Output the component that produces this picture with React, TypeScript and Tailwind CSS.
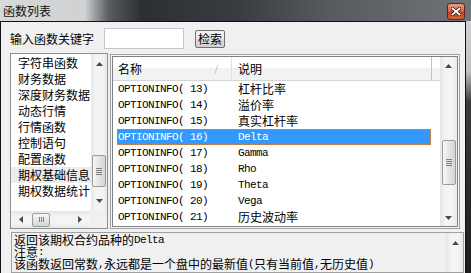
import React from 'react';

const mono = "font-['Liberation_Mono',monospace] text-[11px] tracking-[-0.6px]";

const categories = ['字符串函数', '财务数据', '深度财务数据', '动态行情', '行情函数', '控制语句', '配置函数', '期权基础信息', '期权数据统计'];

const rows: [string, string, boolean][] = [
  ['OPTIONINFO( 13)', '杠杆比率', false],
  ['OPTIONINFO( 14)', '溢价率', false],
  ['OPTIONINFO( 15)', '真实杠杆率', false],
  ['OPTIONINFO( 16)', 'Delta', true],
  ['OPTIONINFO( 17)', 'Gamma', true],
  ['OPTIONINFO( 18)', 'Rho', true],
  ['OPTIONINFO( 19)', 'Theta', true],
  ['OPTIONINFO( 20)', 'Vega', true],
  ['OPTIONINFO( 21)', '历史波动率', false],
];

function Arrow({ dir }: { dir: 'up' | 'down' | 'left' | 'right' }) {
  if (dir === 'up')
    return (
      <svg width="7" height="4" viewBox="0 0 7 4">
        <path d="M0 4L3.5 0L7 4Z" fill="#4a4a4a" />
      </svg>
    );
  if (dir === 'down')
    return (
      <svg width="7" height="4" viewBox="0 0 7 4">
        <path d="M0 0L3.5 4L7 0Z" fill="#4a4a4a" />
      </svg>
    );
  if (dir === 'left')
    return (
      <svg width="4" height="7" viewBox="0 0 4 7">
        <path d="M4 0L0 3.5L4 7Z" fill="#4a4a4a" />
      </svg>
    );
  return (
    <svg width="4" height="7" viewBox="0 0 4 7">
      <path d="M0 0L4 3.5L0 7Z" fill="#4a4a4a" />
    </svg>
  );
}

function VThumb({ className }: { className: string }) {
  return (
    <div
      className={`mx-auto w-[14px] rounded-[2px] border border-[#9b9b9b] bg-[linear-gradient(to_right,#f6f6f6,#e6e6e6_50%,#d4d4d4)] flex flex-col items-center justify-center gap-[1px] ${className}`}
    >
      <div className="w-[6px] h-[1px] bg-[#7c7c7c]" />
      <div className="w-[6px] h-[1px] bg-[#7c7c7c]" />
      <div className="w-[6px] h-[1px] bg-[#7c7c7c]" />
      <div className="w-[6px] h-[1px] bg-[#7c7c7c]" />
    </div>
  );
}

export default function App() {
  return (
    <div className="w-[471px] h-[273px] overflow-hidden flex flex-col font-['Noto_Sans_CJK_SC','Noto_Sans',sans-serif] text-[12px] text-black">
      {/* title bar */}
      <div className="h-[21px] shrink-0 flex items-center justify-between pl-[3px] pr-[6px] bg-[linear-gradient(to_right,#d7d9db_0%,#cfd1d3_18%,#5a5e63_23%,#2c3035_30%,#383c41_50%,#575b60_70%,#707478_100%)]">
        <span className="leading-[14px] text-[#111]">函数列表</span>
        <div className="w-[18px] h-[17px] mt-[1px] rounded-[3px] border border-[#5e2415] bg-[linear-gradient(to_bottom,#eb9a86,#d9694f_45%,#c1401f_55%,#d0603e)] flex items-center justify-center">
          <svg width="10" height="9" viewBox="0 0 10 9">
            <path d="M1.5 1.5L8.5 7.5M8.5 1.5L1.5 7.5" stroke="#3b1408" strokeWidth="3.4" strokeLinecap="square" />
            <path d="M1.5 1.5L8.5 7.5M8.5 1.5L1.5 7.5" stroke="#ffffff" strokeWidth="1.8" strokeLinecap="square" />
          </svg>
        </div>
      </div>

      <div className="flex flex-1 min-h-0">
        {/* client area */}
        <div className="w-[466px] shrink-0 border-l border-t border-r border-[#111] bg-[#f0f0f0] flex flex-col">
          {/* search row */}
          <div className="mt-[6px] ml-[9px] h-[21px] flex items-center">
            <span className="w-[84px] leading-[14px]">输入函数关键字</span>
            <div className="ml-[10px] w-[80px] h-[21px] border border-[#c5c7cc] bg-white" />
            <div className="ml-[11px] w-[30px] h-[18px] rounded-[2px] border border-[#707070] bg-[linear-gradient(to_bottom,#f2f2f2,#ebebeb_50%,#dddddd_50%,#cfcfcf)] flex items-center justify-center leading-[12px]">
              检索
            </div>
          </div>

          {/* lists */}
          <div className="mt-[4px] ml-[9px] flex items-start">
            {/* category list */}
            <div className="w-[98px] h-[176px] border border-[#8e8f91] bg-white flex flex-col">
              <div className="h-[157px] flex">
                <div className="flex-1 overflow-hidden pt-[1px]">
                  {categories.map((c, i) => (
                    <div
                      key={c}
                      className={`h-[16px] pl-[7px] leading-[16px] whitespace-nowrap ${i === 7 ? 'bg-[#ececec]' : ''}`}
                    >
                      {c}
                    </div>
                  ))}
                </div>
                <div className="w-[16px] bg-[linear-gradient(to_right,#e6e6e6,#f4f4f4_30%,#f4f4f4_70%,#e9e9e9)] flex flex-col">
                  <div className="h-[20px] flex items-center justify-center">
                    <Arrow dir="up" />
                  </div>
                  <VThumb className="mt-[81px] h-[32px]" />
                  <div className="flex-1" />
                  <div className="h-[20px] flex items-center justify-center">
                    <Arrow dir="down" />
                  </div>
                </div>
              </div>
              <div className="h-[17px] flex">
                <div className="w-[79px] flex items-center bg-[linear-gradient(to_bottom,#e6e6e6,#f4f4f4_30%,#f4f4f4_70%,#e9e9e9)]">
                  <div className="w-[20px] flex justify-center">
                    <Arrow dir="left" />
                  </div>
                  <div className="ml-[1px] w-[18px] h-[14px] rounded-[2px] border border-[#9b9b9b] bg-[linear-gradient(to_bottom,#f6f6f6,#e6e6e6_50%,#d4d4d4)] flex items-center justify-center gap-[1px]">
                    <div className="w-[1px] h-[5px] bg-[#7c7c7c]" />
                    <div className="w-[1px] h-[5px] bg-[#7c7c7c]" />
                    <div className="w-[1px] h-[5px] bg-[#7c7c7c]" />
                  </div>
                  <div className="flex-1" />
                  <div className="w-[20px] flex justify-center">
                    <Arrow dir="right" />
                  </div>
                </div>
                <div className="flex-1 bg-[#f0f0f0]" />
              </div>
            </div>

            {/* function list view */}
            <div className="ml-[2px] mt-[1px] w-[350px] h-[175px] border border-[#a0a0a0] p-[1px] bg-[#f7f7f7]">
              <div className="h-full border border-[#7f8185] bg-white flex">
                <div className="w-[327px] flex flex-col">
                  <div className="h-[24px] flex border-b border-[#d5d5d5] bg-[linear-gradient(to_bottom,#ffffff,#ffffff_45%,#f1f2f4_50%,#f1f2f4)]">
                    <div className="w-[119px] pl-[5px] flex items-center justify-between border-r border-[#dde1e6] pr-[13px]">
                      <span className="leading-[14px]">名称</span>
                      <span className="text-[9px] text-[#a8a8a8] leading-[10px]">/</span>
                    </div>
                    <div className="w-[200px] pl-[6px] flex items-center border-r border-[#bfc3c8]">
                      <span className="leading-[14px]">说明</span>
                    </div>
                  </div>
                  {rows.map(([name, desc, en]) => {
                    const sel = desc === 'Delta';
                    return (
                      <div
                        key={name}
                        className={`ml-[4px] w-[314px] h-[16px] flex items-center ${sel ? 'bg-[#3399ff] text-white outline-1 outline-dotted -outline-offset-1 outline-[#c7864a]' : ''}`}
                      >
                        <span className={`w-[121px] pl-[1px] whitespace-nowrap leading-[16px] ${mono}`}>{name}</span>
                        <span className={`whitespace-nowrap leading-[16px] ${en ? mono : ''}`}>{desc}</span>
                      </div>
                    );
                  })}
                </div>
                <div className="flex-1 bg-[linear-gradient(to_right,#e6e6e6,#f4f4f4_30%,#f4f4f4_70%,#e9e9e9)] flex flex-col">
                  <div className="h-[17px] flex items-center justify-center">
                    <Arrow dir="up" />
                  </div>
                  <VThumb className="mt-[66px] h-[45px]" />
                  <div className="flex-1" />
                  <div className="h-[17px] flex items-center justify-center">
                    <Arrow dir="down" />
                  </div>
                </div>
              </div>
            </div>
          </div>

          {/* description */}
          <div className="mt-[3px] ml-[10px] w-[453px] flex-1 border border-[#a0a0a0] bg-[#f0f0f0] flex">
            <div className="flex-1 pl-[2px] pt-[1px] whitespace-nowrap flex flex-col">
              <div className="h-[12px] flex items-center">
                <span className="leading-[12px]">返回该期权合约品种的</span>
                <span className={`leading-[12px] ${mono}`}>Delta</span>
              </div>
              <div className="h-[12px] flex items-center">
                <span className="leading-[12px]">注意</span>
                <span className={`leading-[12px] ${mono}`}>:</span>
              </div>
              <div className="h-[12px] flex items-center">
                <span className="leading-[12px]">该函数返回常数</span>
                <span className={`leading-[12px] ${mono}`}>,</span>
                <span className="leading-[12px]">永远都是一个盘中的最新值</span>
                <span className={`leading-[12px] ${mono}`}>(</span>
                <span className="leading-[12px]">只有当前值</span>
                <span className={`leading-[12px] ${mono}`}>,</span>
                <span className="leading-[12px]">无历史值</span>
                <span className={`leading-[12px] ${mono}`}>)</span>
              </div>
            </div>
            <div className="w-[17px] border-l border-[#e2e2e2] bg-[linear-gradient(to_right,#e9e9e9,#f4f4f4_30%,#f4f4f4_70%,#e9e9e9)]">
              <div className="h-[20px] flex items-center justify-center">
                <Arrow dir="up" />
              </div>
            </div>
          </div>
        </div>

        {/* desktop behind the window */}
        <div className="flex-1 bg-[linear-gradient(to_bottom,#cfd0d2_0%,#bfc0c2_20%,#3a3b3d_32%,#1c1c1e_100%)]" />
      </div>
    </div>
  );
}
